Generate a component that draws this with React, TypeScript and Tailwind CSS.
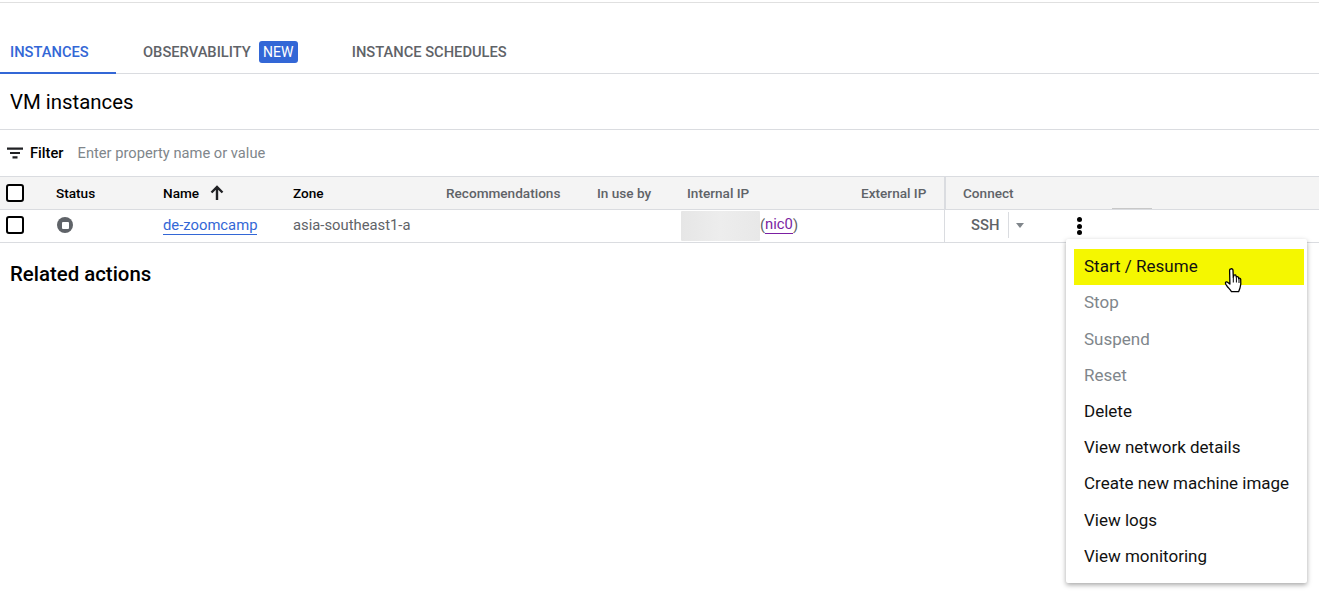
import React from 'react';

const menuItems = [
  { label: 'Stop', disabled: true },
  { label: 'Suspend', disabled: true },
  { label: 'Reset', disabled: true },
  { label: 'Delete' },
  { label: 'View network details' },
  { label: 'Create new machine image' },
  { label: 'View logs' },
  { label: 'View monitoring' },
];

const HandCursor = () => (
  <svg width="20" height="28" viewBox="0 0 20 28" className="absolute left-[1224px] top-[267px]">
    <path
      d="M6.5 2.2c1-.9 2.4-.3 2.5 1.2l.3 7 .6-2.2c.9-.7 2 -.4 2.2.8l.2 1.2c.5-.9 1.9-.8 2.2.3l.2 1.1c.6-.7 1.9-.4 2 .7.3 3 .2 6.4-.7 8.7-.6 1.5-1 2.6-1.4 3.700H7.500c-1-1.900-2.600-3.300-4.200-5.200-.8-1-2-2.500-1.900-3.500.1-1.200 1.500-1.400 2.500-.6l2 1.700-.3-13.400c0-.6.100-1.200.4-1.500z"
      fill="#fff"
      stroke="#000"
      strokeWidth="1.300"
      strokeLinejoin="round"
    />
    <path d="M9.300 10.500v5M12.400 10.500v5M15 12v4" stroke="#000" strokeWidth="1" fill="none" />
  </svg>
);

const Checkbox = () => <div className="w-[18px] h-[18px] rounded-[3px] border-2 border-black bg-white" />;

export default function App() {
  return (
    <div className="relative w-[1319px] h-[603px] overflow-hidden bg-white text-black font-['Roboto',sans-serif]">
      <div className="h-[3px] border-b border-[#e0e0e0]" />

      <div className="h-[71px] flex items-end border-b border-[#dadce0] text-[14.7px] leading-[20px] font-medium">
        <div className="w-[116px] h-[32px] -mb-px pl-[10px] border-b-2 border-[#3367d6] text-[#3367d6]">INSTANCES</div>
        <div className="h-[31px] pl-[27px] flex items-start text-[#5f6368]">
          OBSERVABILITY
          <span className="ml-2 -mt-[1px] w-[39px] h-[22px] flex items-center justify-center rounded-[3px] bg-[#3367d6] text-white text-[14px] font-normal">NEW</span>
        </div>
        <div className="h-[31px] ml-[54px] text-[#5f6368]">INSTANCE SCHEDULES</div>
      </div>

      <div className="h-[56px] pl-[10px] pt-[2px] flex items-center border-b border-[#dadce0] text-[20.4px] leading-none">VM instances</div>

      <div className="h-[47px] flex items-center border-b border-[#dadce0] text-[14.700px]">
        <svg width="16" height="12" viewBox="0 0 16 12" className="ml-[7px]">
          <path d="M0 .5h16v2.200H0zM3 4.900h10v2.200H3zM5.500 9.300h5v2.200h-5z" fill="#202124" />
        </svg>
        <span className="ml-[7px] font-medium">Filter</span>
        <span className="ml-[14px] text-[#80868b]">Enter property name or value</span>
      </div>

      <div className="h-[33px] flex items-center border-b border-[#dadce0] bg-[#f4f4f4] text-[13.600px] font-medium">
        <div className="w-[56px] pl-[6px]"><Checkbox /></div>
        <div className="w-[107px]">Status</div>
        <div className="w-[130px] flex items-center">
          Name
          <svg width="16" height="16" viewBox="0 0 16 16" className="ml-[10px]">
            <path d="M8 2v13M2.500 7.500 8 2l5.500 5.500" fill="none" stroke="#202124" strokeWidth="2.400" />
          </svg>
        </div>
        <div className="w-[153px]">Zone</div>
        <div className="w-[151px] text-[#5f6368]">Recommendations</div>
        <div className="w-[90px] text-[#5f6368]">In use by</div>
        <div className="w-[174px] text-[#5f6368]">Internal IP</div>
        <div className="w-[85px] h-full flex items-center border-r-2 border-[#dadce0] text-[#5f6368]">External IP</div>
        <div className="pl-[17px] text-[#5f6368]">Connect</div>
        <div className="ml-auto mr-[167px] w-[40px] h-px self-end bg-[#c8c8c8]" />
      </div>

      <div className="h-[33px] flex items-center border-b border-[#dadce0] text-[14.800px] text-[#5f6368]">
        <div className="w-[56px] pl-[6px] -translate-y-px"><Checkbox /></div>
        <div className="w-[107px] pl-[1px] -translate-y-px">
          <div className="w-4 h-4 rounded-full bg-[#5f6368] flex items-center justify-center">
            <div className="w-[7px] h-[7px] rounded-[1px] bg-white" />
          </div>
        </div>
        <div className="w-[130px] -translate-y-px">
          <span className="text-[#3367d6] border-b border-[#3367d6]">de-zoomcamp</span>
        </div>
        <div className="w-[388px] -translate-y-px">asia-southeast1-a</div>
        <div className="w-[79px] h-[30px] rounded-[1px] bg-gradient-to-r from-[#e6e6e6] via-[#ededed] to-[#e8e8e8]" />
        <div className="w-[184px] flex items-center -translate-y-px">
          (<span className="text-[#7b1fa2] border-b border-[#7b1fa2] leading-[17px]">nic0</span>)
        </div>
        <div className="h-full flex items-center border-l border-[#dadce0]">
          <span className="ml-[26px] font-medium -translate-y-px">SSH</span>
          <div className="ml-[9px] w-px h-[26px] bg-[#dadce0] -translate-y-px" />
          <div className="ml-[7px] w-0 h-0 border-x-[4.500px] border-x-transparent border-t-[5px] border-t-[#80868b] -translate-y-px" />
          <div className="ml-[53px] flex flex-col gap-[1.500px]">
            <div className="w-[5px] h-[5px] rounded-full bg-black" />
            <div className="w-[5px] h-[5px] rounded-full bg-black" />
            <div className="w-[5px] h-[5px] rounded-full bg-black" />
          </div>
        </div>
      </div>

      <div className="pl-[10px] pt-[19px] text-[20.400px] leading-[24px] font-medium">Related actions</div>

      <div className="absolute left-[1066px] top-[239px] w-[241px] h-[344px] pt-[10px] bg-white rounded-[2px] shadow-[0_2px_5px_rgba(0,0,0,0.35)] text-[17px]">
        <div className="ml-[8px] mr-[3px] h-[36px] pl-[10px] flex items-center bg-[#f5f700] text-[#111]">Start / Resume</div>
        <div className="mt-[0.050px]">
          {menuItems.map((item) => (
            <div
              key={item.label}
              className={`h-[36.200px] pl-[18px] flex items-center ${item.disabled ? 'text-[#80868b]' : 'text-[#111]'}`}
            >
              {item.label}
            </div>
          ))}
        </div>
      </div>

      <HandCursor />
    </div>
  );
}
